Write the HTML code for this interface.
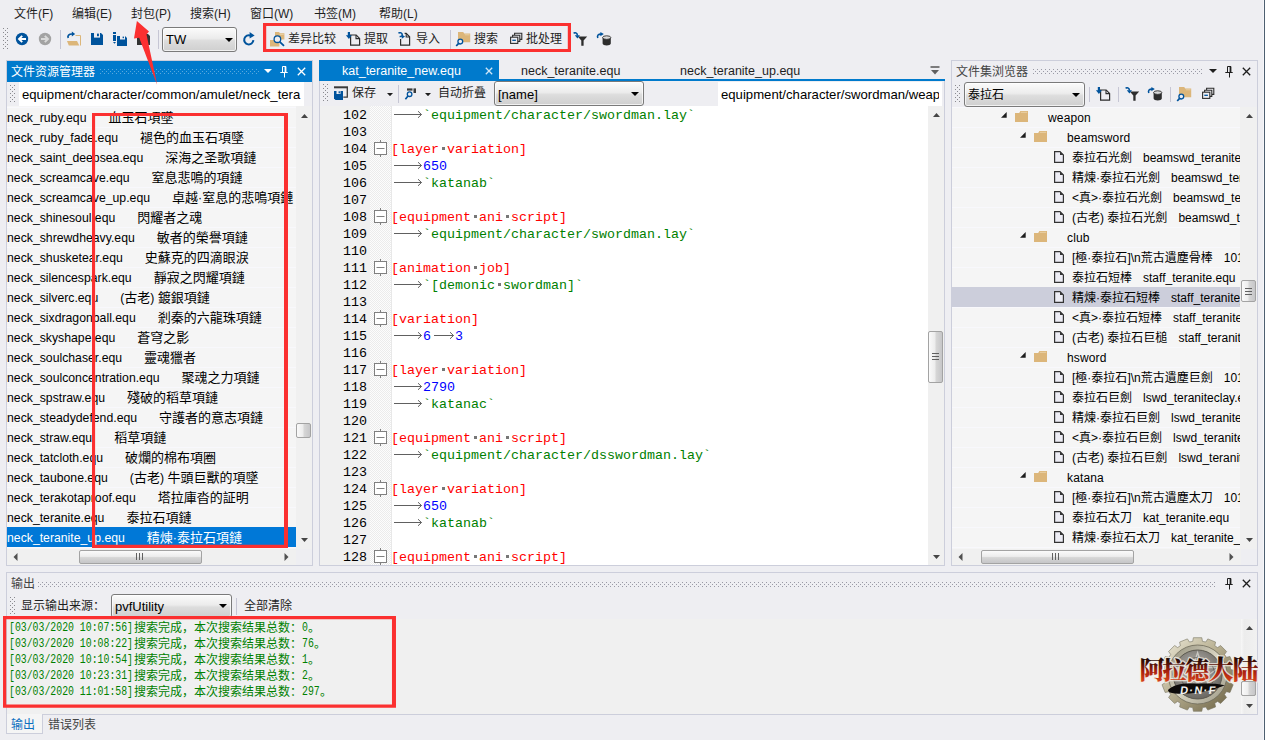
<!DOCTYPE html><html lang="zh"><head><meta charset="utf-8"><title>pvfUtility</title><style>
*{box-sizing:border-box;margin:0;padding:0}
html,body{width:1265px;height:740px;overflow:hidden;background:#eeeef2;font-family:"Liberation Sans","Noto Sans CJK SC",sans-serif;font-size:12px;color:#1e1e1e}
.a{position:absolute;white-space:pre}
.b{position:absolute}
.c{font-family:"Liberation Sans","Noto Sans CJK SC",sans-serif}
.k{font-size:13px}
.m{font-family:"Liberation Mono",monospace}
.combo{position:absolute;border:1px solid #7a7a7a;border-radius:3px;background:linear-gradient(#fbfbfb,#ececec 45%,#dddddd 55%,#cfcfcf);box-shadow:inset 0 0 0 1px rgba(255,255,255,.7)}
.thumb{position:absolute;border:1px solid #a3a3a3;border-radius:2px;background:linear-gradient(90deg,#fafafa,#ededed 45%,#d6d6d6 55%,#c6c6c8)}
.thumbh{position:absolute;border:1px solid #a3a3a3;border-radius:2px;background:linear-gradient(#fafafa,#ededed 45%,#d6d6d6 55%,#c6c6c8)}
</style></head><body><div class="a " style="left:14px;top:3.5px;font-size:12px;line-height:20px;"><span class="c">文件</span>(F)</div>
<div class="a " style="left:72px;top:3.5px;font-size:12px;line-height:20px;"><span class="c">编辑</span>(E)</div>
<div class="a " style="left:131px;top:3.5px;font-size:12px;line-height:20px;"><span class="c">封包</span>(P)</div>
<div class="a " style="left:190px;top:3.5px;font-size:12px;line-height:20px;"><span class="c">搜索</span>(H)</div>
<div class="a " style="left:250px;top:3.5px;font-size:12px;line-height:20px;"><span class="c">窗口</span>(W)</div>
<div class="a " style="left:314px;top:3.5px;font-size:12px;line-height:20px;"><span class="c">书签</span>(M)</div>
<div class="a " style="left:379px;top:3.5px;font-size:12px;line-height:20px;"><span class="c">帮助</span>(L)</div>
<svg class="b" style="left:3px;top:28px;" width="5" height="21" viewBox="0 0 5 21"><g fill="#8a8a8f" shape-rendering="crispEdges"><rect x="0" y="0" width="1" height="1"/><rect x="4" y="0" width="1" height="1"/><rect x="2" y="2" width="1" height="1"/><rect x="0" y="4" width="1" height="1"/><rect x="4" y="4" width="1" height="1"/><rect x="2" y="6" width="1" height="1"/><rect x="0" y="8" width="1" height="1"/><rect x="4" y="8" width="1" height="1"/><rect x="2" y="10" width="1" height="1"/><rect x="0" y="12" width="1" height="1"/><rect x="4" y="12" width="1" height="1"/><rect x="2" y="14" width="1" height="1"/><rect x="0" y="16" width="1" height="1"/><rect x="4" y="16" width="1" height="1"/><rect x="2" y="18" width="1" height="1"/><rect x="0" y="20" width="1" height="1"/><rect x="4" y="20" width="1" height="1"/></g></svg>
<svg class="b" style="left:15px;top:32px;" width="14" height="14" viewBox="0 0 14 14"><circle cx="7" cy="7" r="6.2" fill="#00539c"/><path d="M11 7H4.5M7.2 3.8L4 7L7.2 10.2" stroke="#fff" stroke-width="1.9" fill="none"/></svg>
<svg class="b" style="left:38px;top:32px;" width="14" height="14" viewBox="0 0 14 14"><circle cx="7" cy="7" r="6.2" fill="#a3a3a3"/><path d="M3 7H9.5M6.8 3.8L10 7L6.8 10.2" stroke="#dadada" stroke-width="1.9" fill="none"/></svg>
<div class="b" style="left:60px;top:30px;width:1px;height:19px;background:#c6c6d4;"></div>
<svg class="b" style="left:66px;top:31px;" width="16" height="16" viewBox="0 0 16 16"><path d="M9.5 4.5H14.5V14.5" fill="none" stroke="#dcb67a" stroke-width="1"/><path d="M1 10h10l2.3 4.6H2.8z" fill="#dcb67a"/><path d="M2.2 7C1.2 4.5 3 3 6 3h1.5" fill="none" stroke="#00539c" stroke-width="1.7"/><path d="M5.8 0.6L9.2 3L5.8 5.4z" fill="#00539c"/></svg>
<svg class="b" style="left:91px;top:33px;" width="12" height="12" viewBox="0 0 12 12"><path d="M0 0h10l2 2v10H0z" fill="#00539c"/><rect x="3" y="0" width="6" height="4.6" fill="#eeeef2"/><rect x="6" y="0.6" width="1.9" height="2.6" fill="#00539c"/></svg>
<svg class="b" style="left:113px;top:32px;" width="14" height="14" viewBox="0 0 14 14"><rect x="0" y="0" width="3" height="2" fill="#00539c"/><rect x="0" y="3" width="3" height="6" fill="#00539c"/><path d="M0 10h3l-1.5 1.8z" fill="#00539c"/><path d="M4 4h8l2 2v8H4z" fill="#00539c"/><rect x="7" y="4" width="5" height="3.5" fill="#eeeef2"/><rect x="9.6" y="4.6" width="1.4" height="1.6" fill="#00539c"/></svg>
<svg class="b" style="left:137px;top:34px;" width="13" height="11" viewBox="0 0 13 11"><path d="M0 0h11l2 2v9H0z" fill="#333"/><rect x="3" y="0" width="6" height="4" fill="#eeeef2"/><rect x="6" y="0.5" width="1.8" height="2.4" fill="#333"/></svg>
<div class="b" style="left:158px;top:30px;width:1px;height:19px;background:#c6c6d4;"></div>
<div class="combo" style="left:162px;top:27px;width:75px;height:25px;"></div>
<div class="a " style="left:166px;top:29px;font-size:13px;line-height:21px;color:#000;">TW</div>
<svg class="b" style="left:225px;top:38px" width="8" height="4"><path d="M0 0H8L4.0 4z" fill="#000"/></svg>
<svg class="b" style="left:241px;top:31px;" width="16" height="16" viewBox="0 0 16 16"><path d="M12.4 9.2A4.6 4.6 0 1 1 9.6 4.6" fill="none" stroke="#00539c" stroke-width="2"/><path d="M8.6 1L13.6 4.6L8.6 7.4z" fill="#00539c"/></svg>
<svg class="b" style="left:270px;top:32px;" width="16" height="16" viewBox="0 0 16 16"><path d="M5 0h4l1 1.2h4.4V7.4H5z" fill="#dcb67a"/><path d="M9.6 2.4h4.2" stroke="#ecd6ad" stroke-width="0.8"/><path d="M0 8h4.2l1 1.2H9.4V14.4H0z" fill="#dcb67a"/><circle cx="7.4" cy="7.2" r="3.3" fill="#eeeef2" stroke="#00539c" stroke-width="1.3"/><path d="M9.8 9.8L14 13.8" stroke="#00539c" stroke-width="1.8"/></svg>
<div class="a " style="left:288px;top:29px;font-size:12px;line-height:20px;"><span class="c">差异比较</span></div>
<svg class="b" style="left:345px;top:32px;" width="16" height="16" viewBox="0 0 16 16"><path d="M5.6 3h5.6l3.4 3.4v6.8h-9z" fill="#eeeef2" stroke="#2d2d2d" stroke-width="1.2"/><path d="M11 3v3.6h3.6" fill="none" stroke="#2d2d2d" stroke-width="1.1"/><path d="M3.9 0v4" stroke="#00539c" stroke-width="2.2"/><path d="M0.9 3.2h6L3.9 7.1z" fill="#00539c"/></svg>
<div class="a " style="left:364px;top:29px;font-size:12px;line-height:20px;"><span class="c">提取</span></div>
<svg class="b" style="left:397px;top:32px;" width="16" height="16" viewBox="0 0 16 16"><path d="M3.6 7v6.2h9V4.8L9.2 1.4H7.6" fill="none" stroke="#2d2d2d" stroke-width="1.2"/><path d="M9.2 1.4v3.6h3.4" fill="none" stroke="#2d2d2d" stroke-width="1.1"/><path d="M1.4 1.2C3 0.2 5.6 0.8 5.2 3.2C4.9 4.6 3.4 4.6 2.6 4.4" fill="none" stroke="#00539c" stroke-width="1.5"/><path d="M4.6 2.6L8 4.6L4.8 6.8z" fill="#00539c"/></svg>
<div class="a " style="left:416px;top:29px;font-size:12px;line-height:20px;"><span class="c">导入</span></div>
<div class="b" style="left:450px;top:30px;width:1px;height:19px;background:#c6c6d4;"></div>
<svg class="b" style="left:455px;top:32px;" width="16" height="16" viewBox="0 0 16 16"><path d="M3 0h5.2l1 1.4h6V10.2H3z" fill="#dcb67a"/><path d="M9.8 2.8h4.8" stroke="#ecd6ad" stroke-width="0.8"/><circle cx="5.3" cy="9.6" r="2.4" fill="#eeeef2" stroke="#00539c" stroke-width="1.3"/><path d="M3.6 11.4L1.2 14" stroke="#00539c" stroke-width="1.8"/></svg>
<div class="a " style="left:474px;top:29px;font-size:12px;line-height:20px;"><span class="c">搜索</span></div>
<svg class="b" style="left:507px;top:31.5px;" width="16" height="16" viewBox="0 0 16 16"><path d="M7.6 3V1.2h7.2v6.2h-1.8M5.6 5V3.2h7.2v6.2h-1.8" fill="none" stroke="#2d2d2d" stroke-width="1.1"/><rect x="3.6" y="5.2" width="7.2" height="6.2" fill="none" stroke="#2d2d2d" stroke-width="1.1"/><path d="M5.3 8.3h3.6" stroke="#00539c" stroke-width="1.3"/></svg>
<div class="a " style="left:526px;top:29px;font-size:12px;line-height:20px;"><span class="c">批处理</span></div>
<svg class="b" style="left:572px;top:32px;" width="16" height="16" viewBox="0 0 16 16"><path d="M5.8 4.6h9.4l-3.6 4v5.2h-2.3v-5.2z" fill="#2d2d2d"/><path d="M1.6 1.2C3.4 0.2 5.6 1.2 5.3 3.6" fill="none" stroke="#00539c" stroke-width="1.6"/><path d="M2.8 3.2h5.2L5.4 6.6z" fill="#00539c"/></svg>
<svg class="b" style="left:595.5px;top:32px;" width="16" height="16" viewBox="0 0 16 16"><path d="M6.6 5.6v6c0 2.6 8.2 2.6 8.2 0v-6z" fill="#2d2d2d"/><ellipse cx="10.7" cy="5.6" rx="4.1" ry="1.8" fill="#d9d9d9" stroke="#2d2d2d" stroke-width="0.9"/><path d="M1.8 6C0.8 3.4 2.4 2.1 5 2.1" fill="none" stroke="#00539c" stroke-width="1.6"/><path d="M4.4 0L7.8 2.1L4.4 4.3z" fill="#00539c"/></svg>
<div class="b" style="left:6px;top:60px;width:307px;height:506px;border:1px solid #cccedb"></div>
<div class="b" style="left:7px;top:61px;width:305px;height:21px;background:#007acc;"></div>
<div class="a " style="left:11px;top:62px;font-size:12px;line-height:20px;color:#fff;"><span class="c">文件资源管理器</span></div>
<svg class="b" style="left:100px;top:69px;" width="160" height="5" viewBox="0 0 160 5"><defs><pattern id="hg36" width="4" height="4" patternUnits="userSpaceOnUse"><rect x="0" y="0" width="1" height="1" fill="#59a8de"/><rect x="2" y="2" width="1" height="1" fill="#59a8de"/></pattern></defs><rect width="160" height="5" fill="url(#hg36)" shape-rendering="crispEdges"/></svg>
<svg class="b" style="left:264px;top:69px" width="8" height="4"><path d="M0 0H8L4.0 4z" fill="#fff"/></svg>
<svg class="b" style="left:280px;top:66px;" width="8" height="12" viewBox="0 0 8 12"><path d="M2.5 0.5h3.5M2.5 0.5v6M0.3 6.5h7.4M4.5 7v4.5" fill="none" stroke="#fff" stroke-width="1"/><path d="M5.5 0.5v6" stroke="#fff" stroke-width="1.8"/></svg>
<svg class="b" style="left:296.5px;top:66.5px;" width="9" height="9" viewBox="0 0 9 9"><path d="M0.8 0.8L8.2 8.2M8.2 0.8L0.8 8.2" stroke="#fff" stroke-width="1.3"/></svg>
<svg class="b" style="left:10px;top:85px;" width="5" height="17" viewBox="0 0 5 17"><g fill="#8a8a8f" shape-rendering="crispEdges"><rect x="0" y="0" width="1" height="1"/><rect x="4" y="0" width="1" height="1"/><rect x="2" y="2" width="1" height="1"/><rect x="0" y="4" width="1" height="1"/><rect x="4" y="4" width="1" height="1"/><rect x="2" y="6" width="1" height="1"/><rect x="0" y="8" width="1" height="1"/><rect x="4" y="8" width="1" height="1"/><rect x="2" y="10" width="1" height="1"/><rect x="0" y="12" width="1" height="1"/><rect x="4" y="12" width="1" height="1"/><rect x="2" y="14" width="1" height="1"/><rect x="0" y="16" width="1" height="1"/><rect x="4" y="16" width="1" height="1"/></g></svg>
<div class="b" style="left:19px;top:82px;width:285px;height:24px;background:#fff;"></div>
<div class="a " style="left:22px;top:84px;font-size:13.15px;line-height:21.15px;color:#000;">equipment/character/common/amulet/neck_tera</div>
<div class="b" style="left:7px;top:106px;width:289px;height:443px;background:#f5f5f5;background-image:repeating-linear-gradient(#f8f8fc 0 1px,#f5f5f5 1px 20px);background-position:0 1px"></div>
<div class="a" style="left:7px;top:108px;font-size:12.25px;line-height:20px;color:#000"><span>neck_ruby.equ</span><span style="margin-left:22px"><span class="c k">血玉石項墜</span></span></div>
<div class="a" style="left:7px;top:128px;font-size:12.25px;line-height:20px;color:#000"><span>neck_ruby_fade.equ</span><span style="margin-left:22px"><span class="c k">褪色的血玉石項墜</span></span></div>
<div class="a" style="left:7px;top:148px;font-size:12.25px;line-height:20px;color:#000"><span>neck_saint_deepsea.equ</span><span style="margin-left:22px"><span class="c k">深海之圣歌項鏈</span></span></div>
<div class="a" style="left:7px;top:168px;font-size:12.25px;line-height:20px;color:#000"><span>neck_screamcave.equ</span><span style="margin-left:22px"><span class="c k">窒息悲鳴的項鏈</span></span></div>
<div class="a" style="left:7px;top:188px;font-size:12.25px;line-height:20px;color:#000"><span>neck_screamcave_up.equ</span><span style="margin-left:22px"><span class="c k">卓越</span>·<span class="c k">窒息的悲鳴項鏈</span></span></div>
<div class="a" style="left:7px;top:208px;font-size:12.25px;line-height:20px;color:#000"><span>neck_shinesoul.equ</span><span style="margin-left:22px"><span class="c k">閃耀者之魂</span></span></div>
<div class="a" style="left:7px;top:228px;font-size:12.25px;line-height:20px;color:#000"><span>neck_shrewdheavy.equ</span><span style="margin-left:22px"><span class="c k">敏者的榮譽項鏈</span></span></div>
<div class="a" style="left:7px;top:248px;font-size:12.25px;line-height:20px;color:#000"><span>neck_shusketear.equ</span><span style="margin-left:22px"><span class="c k">史蘇克的四滴眼淚</span></span></div>
<div class="a" style="left:7px;top:268px;font-size:12.25px;line-height:20px;color:#000"><span>neck_silencespark.equ</span><span style="margin-left:22px"><span class="c k">靜寂之閃耀項鏈</span></span></div>
<div class="a" style="left:7px;top:288px;font-size:12.25px;line-height:20px;color:#000"><span>neck_silverc.equ</span><span style="margin-left:22px">(<span class="c k">古老</span>) <span class="c k">鍍銀項鏈</span></span></div>
<div class="a" style="left:7px;top:308px;font-size:12.25px;line-height:20px;color:#000"><span>neck_sixdragonball.equ</span><span style="margin-left:22px"><span class="c k">剎秦的六龍珠項鏈</span></span></div>
<div class="a" style="left:7px;top:328px;font-size:12.25px;line-height:20px;color:#000"><span>neck_skyshape.equ</span><span style="margin-left:22px"><span class="c k">蒼穹之影</span></span></div>
<div class="a" style="left:7px;top:348px;font-size:12.25px;line-height:20px;color:#000"><span>neck_soulchaser.equ</span><span style="margin-left:22px"><span class="c k">靈魂獵者</span></span></div>
<div class="a" style="left:7px;top:368px;font-size:12.25px;line-height:20px;color:#000"><span>neck_soulconcentration.equ</span><span style="margin-left:22px"><span class="c k">聚魂之力項鏈</span></span></div>
<div class="a" style="left:7px;top:388px;font-size:12.25px;line-height:20px;color:#000"><span>neck_spstraw.equ</span><span style="margin-left:22px"><span class="c k">殘破的稻草項鏈</span></span></div>
<div class="a" style="left:7px;top:408px;font-size:12.25px;line-height:20px;color:#000"><span>neck_steadydefend.equ</span><span style="margin-left:22px"><span class="c k">守護者的意志項鏈</span></span></div>
<div class="a" style="left:7px;top:428px;font-size:12.25px;line-height:20px;color:#000"><span>neck_straw.equ</span><span style="margin-left:22px"><span class="c k">稻草項鏈</span></span></div>
<div class="a" style="left:7px;top:448px;font-size:12.25px;line-height:20px;color:#000"><span>neck_tatcloth.equ</span><span style="margin-left:22px"><span class="c k">破爛的棉布項圈</span></span></div>
<div class="a" style="left:7px;top:468px;font-size:12.25px;line-height:20px;color:#000"><span>neck_taubone.equ</span><span style="margin-left:22px">(<span class="c k">古老</span>) <span class="c k">牛頭巨獸的項墜</span></span></div>
<div class="a" style="left:7px;top:488px;font-size:12.25px;line-height:20px;color:#000"><span>neck_terakotaproof.equ</span><span style="margin-left:22px"><span class="c k">塔拉庫沓的証明</span></span></div>
<div class="a" style="left:7px;top:508px;font-size:12.25px;line-height:20px;color:#000"><span>neck_teranite.equ</span><span style="margin-left:22px"><span class="c k">泰拉石項鏈</span></span></div>
<div class="b" style="left:7px;top:527px;width:289px;height:20px;background:#0078d7;"></div>
<div class="a" style="left:7px;top:528px;font-size:12.25px;line-height:20px;color:#fff"><span>neck_teranite_up.equ</span><span style="margin-left:22px"><span class="c k">精煉</span>·<span class="c k">泰拉石項鏈</span></span></div>
<div class="b" style="left:296px;top:106px;width:16px;height:443px;background:#f0f0f0;"></div>
<svg class="b" style="left:301px;top:114px;" width="7" height="4" viewBox="0 0 7 4"><path d="M0 4L3.5 0L7 4z" fill="#454545"/></svg>
<svg class="b" style="left:301px;top:538px;" width="7" height="4" viewBox="0 0 7 4"><path d="M0 0L3.5 4L7 0z" fill="#454545"/></svg>
<div class="thumb" style="left:296px;top:423px;width:15px;height:15px;"></div>
<div class="b" style="left:7px;top:549px;width:289px;height:16px;background:#f0f0f0;"></div>
<div class="thumbh" style="left:79px;top:549.5px;width:123px;height:14px;"></div>
<svg class="b" style="left:12.5px;top:552.5px;" width="5" height="8" viewBox="0 0 5 8"><path d="M4.5 0L0.5 4L4.5 8z" fill="#505050"/></svg>
<svg class="b" style="left:284px;top:552.5px;" width="5" height="8" viewBox="0 0 5 8"><path d="M0.5 0L4.5 4L0.5 8z" fill="#505050"/></svg>
<div class="b" style="left:136px;top:553px;width:1px;height:7px;background:#606060;"></div>
<div class="b" style="left:139px;top:553px;width:1px;height:7px;background:#606060;"></div>
<div class="b" style="left:142px;top:553px;width:1px;height:7px;background:#606060;"></div>
<div class="b" style="left:319px;top:60px;width:180px;height:21px;background:#007acc;"></div>
<div class="b" style="left:319px;top:79px;width:626px;height:2px;background:#007acc;"></div>
<div class="a " style="left:342px;top:61px;font-size:12.5px;line-height:20.5px;color:#fff;">kat_teranite_new.equ</div>
<svg class="b" style="left:484.5px;top:66.5px;" width="8" height="8" viewBox="0 0 8 8"><path d="M0.8 0.8L7.2 7.2M7.2 0.8L0.8 7.2" stroke="#cfe6f7" stroke-width="1.3"/></svg>
<div class="a " style="left:521px;top:61px;font-size:12.5px;line-height:20.5px;color:#1e1e1e;">neck_teranite.equ</div>
<div class="a " style="left:680px;top:61px;font-size:12.5px;line-height:20.5px;color:#1e1e1e;">neck_teranite_up.equ</div>
<svg class="b" style="left:930px;top:66px;" width="10" height="9" viewBox="0 0 10 9"><path d="M0.5 1h9" stroke="#606060" stroke-width="1.6"/><path d="M1 4h8L5 8.5z" fill="#606060"/></svg>
<div class="b" style="left:319px;top:81px;width:1px;height:485px;background:#cccedb;"></div>
<div class="b" style="left:944px;top:81px;width:1px;height:485px;background:#cccedb;"></div>
<div class="b" style="left:319px;top:565px;width:626px;height:1px;background:#cccedb;"></div>
<svg class="b" style="left:323px;top:84px;" width="5" height="17" viewBox="0 0 5 17"><g fill="#8a8a8f" shape-rendering="crispEdges"><rect x="0" y="0" width="1" height="1"/><rect x="4" y="0" width="1" height="1"/><rect x="2" y="2" width="1" height="1"/><rect x="0" y="4" width="1" height="1"/><rect x="4" y="4" width="1" height="1"/><rect x="2" y="6" width="1" height="1"/><rect x="0" y="8" width="1" height="1"/><rect x="4" y="8" width="1" height="1"/><rect x="2" y="10" width="1" height="1"/><rect x="0" y="12" width="1" height="1"/><rect x="4" y="12" width="1" height="1"/><rect x="2" y="14" width="1" height="1"/><rect x="0" y="16" width="1" height="1"/><rect x="4" y="16" width="1" height="1"/></g></svg>
<svg class="b" style="left:333px;top:86px;" width="15" height="14" viewBox="0 0 15 14"><rect x="1" y="0.3" width="14" height="2" fill="#3a3a3a"/><path d="M14.3 2v9.2h-4" fill="none" stroke="#3a3a3a" stroke-width="1.3"/><path d="M1 5h9v9H2.5L1 12.5z" fill="#00539c"/><rect x="3.5" y="5" width="4" height="3" fill="#eeeef2"/><rect x="5.6" y="5.3" width="1.3" height="2" fill="#00539c"/></svg>
<div class="a " style="left:352px;top:83px;font-size:12px;line-height:20px;"><span class="c">保存</span></div>
<svg class="b" style="left:386.5px;top:92.5px" width="6" height="3.2"><path d="M0 0H6L3.0 3.2z" fill="#1e1e1e"/></svg>
<div class="b" style="left:398px;top:85px;width:1px;height:18px;background:#c6c6d4;"></div>
<svg class="b" style="left:404px;top:87px;" width="13" height="13" viewBox="0 0 13 13"><rect x="3" y="1.4" width="5.5" height="2.2" fill="#3a3a3a"/><rect x="9.5" y="1.4" width="2.5" height="4.6" fill="#3a3a3a"/><circle cx="5.6" cy="7.2" r="2.3" fill="none" stroke="#00539c" stroke-width="1.3"/><path d="M4 9L1.4 12.2" stroke="#00539c" stroke-width="1.7"/></svg>
<svg class="b" style="left:424.5px;top:92.5px" width="6" height="3.2"><path d="M0 0H6L3.0 3.2z" fill="#1e1e1e"/></svg>
<div class="a " style="left:438px;top:83px;font-size:12px;line-height:20px;"><span class="c">自动折叠</span></div>
<div class="combo" style="left:494px;top:81px;width:150px;height:25px;"></div>
<div class="a " style="left:498px;top:84px;font-size:13px;line-height:21px;color:#000;">[name]</div>
<svg class="b" style="left:631px;top:92px" width="8" height="4"><path d="M0 0H8L4.0 4z" fill="#000"/></svg>
<div class="b" style="left:718px;top:82px;width:224px;height:24px;background:#fff;"></div>
<div class="a" style="left:721px;top:83.5px;line-height:21px;font-size:13.15px;color:#000;width:218px;overflow:hidden">equipment/character/swordman/weapon</div>
<div class="b" style="left:320px;top:106px;width:50px;height:459px;background:#f0f0f0;"></div>
<div class="b" style="left:370px;top:106px;width:21px;height:459px;background-image:conic-gradient(#fdfdfd 25%,#ececec 0 50%,#fdfdfd 0 75%,#ececec 0);background-size:2px 2px"></div>
<div class="b" style="left:391px;top:106px;width:1px;height:459px;background:#e8e8e8;"></div>
<div class="b" style="left:392px;top:106px;width:536px;height:459px;background:#fff;"></div>
<div class="b" style="left:320px;top:106px;width:608px;height:459px;overflow:hidden">
<div class="a m" style="left:23px;top:0px;line-height:19px;font-size:13.33px;color:#000;width:24px;text-align:right">102</div>
<svg class="b" style="left:71px;top:0px" width="32" height="17" viewBox="0 0 32 17"><path d="M3 8.5H30.5M27 5.2L30.5 8.5L27 11.8" fill="none" stroke="#606060" stroke-width="1"/></svg>
<div class="a m" style="left:103px;top:0px;line-height:19px;font-size:13.33px;color:#008000">`equipment/character/swordman.lay`</div>
<div class="a m" style="left:23px;top:17px;line-height:19px;font-size:13.33px;color:#000;width:24px;text-align:right">103</div>
<div class="a m" style="left:23px;top:34px;line-height:19px;font-size:13.33px;color:#000;width:24px;text-align:right">104</div>
<svg class="b" style="left:54px;top:34px" width="13" height="17" viewBox="0 0 13 17"><path d="M6.5 0v2M6.5 15v2" stroke="#808080"/><rect x="0.5" y="2.5" width="12" height="12" fill="#fff" stroke="#808080"/><path d="M2.5 8.5h8" stroke="#808080"/></svg>
<div class="a m" style="left:71px;top:34px;line-height:19px;font-size:13.33px;color:#ff0000">[layer</div>
<div class="b" style="left:122px;top:41px;width:3px;height:3px;background:#777"></div>
<div class="a m" style="left:127px;top:34px;line-height:19px;font-size:13.33px;color:#ff0000">variation]</div>
<div class="a m" style="left:23px;top:51px;line-height:19px;font-size:13.33px;color:#000;width:24px;text-align:right">105</div>
<svg class="b" style="left:71px;top:51px" width="32" height="17" viewBox="0 0 32 17"><path d="M3 8.5H30.5M27 5.2L30.5 8.5L27 11.8" fill="none" stroke="#606060" stroke-width="1"/></svg>
<div class="a m" style="left:103px;top:51px;line-height:19px;font-size:13.33px;color:#0000ff">650</div>
<div class="a m" style="left:23px;top:68px;line-height:19px;font-size:13.33px;color:#000;width:24px;text-align:right">106</div>
<svg class="b" style="left:71px;top:68px" width="32" height="17" viewBox="0 0 32 17"><path d="M3 8.5H30.5M27 5.2L30.5 8.5L27 11.8" fill="none" stroke="#606060" stroke-width="1"/></svg>
<div class="a m" style="left:103px;top:68px;line-height:19px;font-size:13.33px;color:#008000">`katanab`</div>
<div class="a m" style="left:23px;top:85px;line-height:19px;font-size:13.33px;color:#000;width:24px;text-align:right">107</div>
<div class="a m" style="left:23px;top:102px;line-height:19px;font-size:13.33px;color:#000;width:24px;text-align:right">108</div>
<svg class="b" style="left:54px;top:102px" width="13" height="17" viewBox="0 0 13 17"><path d="M6.5 0v2M6.5 15v2" stroke="#808080"/><rect x="0.5" y="2.5" width="12" height="12" fill="#fff" stroke="#808080"/><path d="M2.5 8.5h8" stroke="#808080"/></svg>
<div class="a m" style="left:71px;top:102px;line-height:19px;font-size:13.33px;color:#ff0000">[equipment</div>
<div class="b" style="left:154px;top:109px;width:3px;height:3px;background:#777"></div>
<div class="a m" style="left:159px;top:102px;line-height:19px;font-size:13.33px;color:#ff0000">ani</div>
<div class="b" style="left:186px;top:109px;width:3px;height:3px;background:#777"></div>
<div class="a m" style="left:191px;top:102px;line-height:19px;font-size:13.33px;color:#ff0000">script]</div>
<div class="a m" style="left:23px;top:119px;line-height:19px;font-size:13.33px;color:#000;width:24px;text-align:right">109</div>
<svg class="b" style="left:71px;top:119px" width="32" height="17" viewBox="0 0 32 17"><path d="M3 8.5H30.5M27 5.2L30.5 8.5L27 11.8" fill="none" stroke="#606060" stroke-width="1"/></svg>
<div class="a m" style="left:103px;top:119px;line-height:19px;font-size:13.33px;color:#008000">`equipment/character/swordman.lay`</div>
<div class="a m" style="left:23px;top:136px;line-height:19px;font-size:13.33px;color:#000;width:24px;text-align:right">110</div>
<div class="a m" style="left:23px;top:153px;line-height:19px;font-size:13.33px;color:#000;width:24px;text-align:right">111</div>
<svg class="b" style="left:54px;top:153px" width="13" height="17" viewBox="0 0 13 17"><path d="M6.5 0v2M6.5 15v2" stroke="#808080"/><rect x="0.5" y="2.5" width="12" height="12" fill="#fff" stroke="#808080"/><path d="M2.5 8.5h8" stroke="#808080"/></svg>
<div class="a m" style="left:71px;top:153px;line-height:19px;font-size:13.33px;color:#ff0000">[animation</div>
<div class="b" style="left:154px;top:160px;width:3px;height:3px;background:#777"></div>
<div class="a m" style="left:159px;top:153px;line-height:19px;font-size:13.33px;color:#ff0000">job]</div>
<div class="a m" style="left:23px;top:170px;line-height:19px;font-size:13.33px;color:#000;width:24px;text-align:right">112</div>
<svg class="b" style="left:71px;top:170px" width="32" height="17" viewBox="0 0 32 17"><path d="M3 8.5H30.5M27 5.2L30.5 8.5L27 11.8" fill="none" stroke="#606060" stroke-width="1"/></svg>
<div class="a m" style="left:103px;top:170px;line-height:19px;font-size:13.33px;color:#008000">`[demonic</div>
<div class="b" style="left:178px;top:177px;width:3px;height:3px;background:#777"></div>
<div class="a m" style="left:183px;top:170px;line-height:19px;font-size:13.33px;color:#008000">swordman]`</div>
<div class="a m" style="left:23px;top:187px;line-height:19px;font-size:13.33px;color:#000;width:24px;text-align:right">113</div>
<div class="a m" style="left:23px;top:204px;line-height:19px;font-size:13.33px;color:#000;width:24px;text-align:right">114</div>
<svg class="b" style="left:54px;top:204px" width="13" height="17" viewBox="0 0 13 17"><path d="M6.5 0v2M6.5 15v2" stroke="#808080"/><rect x="0.5" y="2.5" width="12" height="12" fill="#fff" stroke="#808080"/><path d="M2.5 8.5h8" stroke="#808080"/></svg>
<div class="a m" style="left:71px;top:204px;line-height:19px;font-size:13.33px;color:#ff0000">[variation]</div>
<div class="a m" style="left:23px;top:221px;line-height:19px;font-size:13.33px;color:#000;width:24px;text-align:right">115</div>
<svg class="b" style="left:71px;top:221px" width="32" height="17" viewBox="0 0 32 17"><path d="M3 8.5H30.5M27 5.2L30.5 8.5L27 11.8" fill="none" stroke="#606060" stroke-width="1"/></svg>
<div class="a m" style="left:103px;top:221px;line-height:19px;font-size:13.33px;color:#0000ff">6</div>
<svg class="b" style="left:111px;top:221px" width="24" height="17" viewBox="0 0 24 17"><path d="M3 8.5H22.5M19 5.2L22.5 8.5L19 11.8" fill="none" stroke="#606060" stroke-width="1"/></svg>
<div class="a m" style="left:135px;top:221px;line-height:19px;font-size:13.33px;color:#0000ff">3</div>
<div class="a m" style="left:23px;top:238px;line-height:19px;font-size:13.33px;color:#000;width:24px;text-align:right">116</div>
<div class="a m" style="left:23px;top:255px;line-height:19px;font-size:13.33px;color:#000;width:24px;text-align:right">117</div>
<svg class="b" style="left:54px;top:255px" width="13" height="17" viewBox="0 0 13 17"><path d="M6.5 0v2M6.5 15v2" stroke="#808080"/><rect x="0.5" y="2.5" width="12" height="12" fill="#fff" stroke="#808080"/><path d="M2.5 8.5h8" stroke="#808080"/></svg>
<div class="a m" style="left:71px;top:255px;line-height:19px;font-size:13.33px;color:#ff0000">[layer</div>
<div class="b" style="left:122px;top:262px;width:3px;height:3px;background:#777"></div>
<div class="a m" style="left:127px;top:255px;line-height:19px;font-size:13.33px;color:#ff0000">variation]</div>
<div class="a m" style="left:23px;top:272px;line-height:19px;font-size:13.33px;color:#000;width:24px;text-align:right">118</div>
<svg class="b" style="left:71px;top:272px" width="32" height="17" viewBox="0 0 32 17"><path d="M3 8.5H30.5M27 5.2L30.5 8.5L27 11.8" fill="none" stroke="#606060" stroke-width="1"/></svg>
<div class="a m" style="left:103px;top:272px;line-height:19px;font-size:13.33px;color:#0000ff">2790</div>
<div class="a m" style="left:23px;top:289px;line-height:19px;font-size:13.33px;color:#000;width:24px;text-align:right">119</div>
<svg class="b" style="left:71px;top:289px" width="32" height="17" viewBox="0 0 32 17"><path d="M3 8.5H30.5M27 5.2L30.5 8.5L27 11.8" fill="none" stroke="#606060" stroke-width="1"/></svg>
<div class="a m" style="left:103px;top:289px;line-height:19px;font-size:13.33px;color:#008000">`katanac`</div>
<div class="a m" style="left:23px;top:306px;line-height:19px;font-size:13.33px;color:#000;width:24px;text-align:right">120</div>
<div class="a m" style="left:23px;top:323px;line-height:19px;font-size:13.33px;color:#000;width:24px;text-align:right">121</div>
<svg class="b" style="left:54px;top:323px" width="13" height="17" viewBox="0 0 13 17"><path d="M6.5 0v2M6.5 15v2" stroke="#808080"/><rect x="0.5" y="2.5" width="12" height="12" fill="#fff" stroke="#808080"/><path d="M2.5 8.5h8" stroke="#808080"/></svg>
<div class="a m" style="left:71px;top:323px;line-height:19px;font-size:13.33px;color:#ff0000">[equipment</div>
<div class="b" style="left:154px;top:330px;width:3px;height:3px;background:#777"></div>
<div class="a m" style="left:159px;top:323px;line-height:19px;font-size:13.33px;color:#ff0000">ani</div>
<div class="b" style="left:186px;top:330px;width:3px;height:3px;background:#777"></div>
<div class="a m" style="left:191px;top:323px;line-height:19px;font-size:13.33px;color:#ff0000">script]</div>
<div class="a m" style="left:23px;top:340px;line-height:19px;font-size:13.33px;color:#000;width:24px;text-align:right">122</div>
<svg class="b" style="left:71px;top:340px" width="32" height="17" viewBox="0 0 32 17"><path d="M3 8.5H30.5M27 5.2L30.5 8.5L27 11.8" fill="none" stroke="#606060" stroke-width="1"/></svg>
<div class="a m" style="left:103px;top:340px;line-height:19px;font-size:13.33px;color:#008000">`equipment/character/dsswordman.lay`</div>
<div class="a m" style="left:23px;top:357px;line-height:19px;font-size:13.33px;color:#000;width:24px;text-align:right">123</div>
<div class="a m" style="left:23px;top:374px;line-height:19px;font-size:13.33px;color:#000;width:24px;text-align:right">124</div>
<svg class="b" style="left:54px;top:374px" width="13" height="17" viewBox="0 0 13 17"><path d="M6.5 0v2M6.5 15v2" stroke="#808080"/><rect x="0.5" y="2.5" width="12" height="12" fill="#fff" stroke="#808080"/><path d="M2.5 8.5h8" stroke="#808080"/></svg>
<div class="a m" style="left:71px;top:374px;line-height:19px;font-size:13.33px;color:#ff0000">[layer</div>
<div class="b" style="left:122px;top:381px;width:3px;height:3px;background:#777"></div>
<div class="a m" style="left:127px;top:374px;line-height:19px;font-size:13.33px;color:#ff0000">variation]</div>
<div class="a m" style="left:23px;top:391px;line-height:19px;font-size:13.33px;color:#000;width:24px;text-align:right">125</div>
<svg class="b" style="left:71px;top:391px" width="32" height="17" viewBox="0 0 32 17"><path d="M3 8.5H30.5M27 5.2L30.5 8.5L27 11.8" fill="none" stroke="#606060" stroke-width="1"/></svg>
<div class="a m" style="left:103px;top:391px;line-height:19px;font-size:13.33px;color:#0000ff">650</div>
<div class="a m" style="left:23px;top:408px;line-height:19px;font-size:13.33px;color:#000;width:24px;text-align:right">126</div>
<svg class="b" style="left:71px;top:408px" width="32" height="17" viewBox="0 0 32 17"><path d="M3 8.5H30.5M27 5.2L30.5 8.5L27 11.8" fill="none" stroke="#606060" stroke-width="1"/></svg>
<div class="a m" style="left:103px;top:408px;line-height:19px;font-size:13.33px;color:#008000">`katanab`</div>
<div class="a m" style="left:23px;top:425px;line-height:19px;font-size:13.33px;color:#000;width:24px;text-align:right">127</div>
<div class="a m" style="left:23px;top:442px;line-height:19px;font-size:13.33px;color:#000;width:24px;text-align:right">128</div>
<svg class="b" style="left:54px;top:442px" width="13" height="17" viewBox="0 0 13 17"><path d="M6.5 0v2M6.5 15v2" stroke="#808080"/><rect x="0.5" y="2.5" width="12" height="12" fill="#fff" stroke="#808080"/><path d="M2.5 8.5h8" stroke="#808080"/></svg>
<div class="a m" style="left:71px;top:442px;line-height:19px;font-size:13.33px;color:#ff0000">[equipment</div>
<div class="b" style="left:154px;top:449px;width:3px;height:3px;background:#777"></div>
<div class="a m" style="left:159px;top:442px;line-height:19px;font-size:13.33px;color:#ff0000">ani</div>
<div class="b" style="left:186px;top:449px;width:3px;height:3px;background:#777"></div>
<div class="a m" style="left:191px;top:442px;line-height:19px;font-size:13.33px;color:#ff0000">script]</div>
</div>
<div class="b" style="left:928px;top:106px;width:16px;height:459px;background:#f0f0f0;"></div>
<svg class="b" style="left:933px;top:113px;" width="7" height="4" viewBox="0 0 7 4"><path d="M0 4L3.5 0L7 4z" fill="#454545"/></svg>
<svg class="b" style="left:933px;top:555px;" width="7" height="4" viewBox="0 0 7 4"><path d="M0 0L3.5 4L7 0z" fill="#454545"/></svg>
<div class="thumb" style="left:928px;top:331px;width:15px;height:52px;"></div>
<div class="b" style="left:932px;top:353px;width:7px;height:1px;background:#606060;"></div>
<div class="b" style="left:932px;top:356px;width:7px;height:1px;background:#606060;"></div>
<div class="b" style="left:932px;top:359px;width:7px;height:1px;background:#606060;"></div>
<div class="b" style="left:951px;top:60px;width:307px;height:506px;border:1px solid #cccedb"></div>
<div class="a " style="left:956px;top:62px;font-size:12px;line-height:20px;color:#444;"><span class="c">文件集浏览器</span></div>
<svg class="b" style="left:1033px;top:69px;" width="169" height="5" viewBox="0 0 169 5"><defs><pattern id="hg205" width="4" height="4" patternUnits="userSpaceOnUse"><rect x="0" y="0" width="1" height="1" fill="#9a9aa6"/><rect x="2" y="2" width="1" height="1" fill="#9a9aa6"/></pattern></defs><rect width="169" height="5" fill="url(#hg205)" shape-rendering="crispEdges"/></svg>
<svg class="b" style="left:1209px;top:69px" width="8" height="4"><path d="M0 0H8L4.0 4z" fill="#1e1e1e"/></svg>
<svg class="b" style="left:1225px;top:66px;" width="8" height="12" viewBox="0 0 8 12"><path d="M2.5 0.5h3.5M2.5 0.5v6M0.3 6.5h7.4M4.5 7v4.5" fill="none" stroke="#1e1e1e" stroke-width="1"/><path d="M5.5 0.5v6" stroke="#1e1e1e" stroke-width="1.8"/></svg>
<svg class="b" style="left:1241.5px;top:66.5px;" width="9" height="9" viewBox="0 0 9 9"><path d="M0.8 0.8L8.2 8.2M8.2 0.8L0.8 8.2" stroke="#1e1e1e" stroke-width="1.3"/></svg>
<svg class="b" style="left:955px;top:85px;" width="5" height="17" viewBox="0 0 5 17"><g fill="#8a8a8f" shape-rendering="crispEdges"><rect x="0" y="0" width="1" height="1"/><rect x="4" y="0" width="1" height="1"/><rect x="2" y="2" width="1" height="1"/><rect x="0" y="4" width="1" height="1"/><rect x="4" y="4" width="1" height="1"/><rect x="2" y="6" width="1" height="1"/><rect x="0" y="8" width="1" height="1"/><rect x="4" y="8" width="1" height="1"/><rect x="2" y="10" width="1" height="1"/><rect x="0" y="12" width="1" height="1"/><rect x="4" y="12" width="1" height="1"/><rect x="2" y="14" width="1" height="1"/><rect x="0" y="16" width="1" height="1"/><rect x="4" y="16" width="1" height="1"/></g></svg>
<div class="combo" style="left:964px;top:82px;width:121px;height:25px;"></div>
<div class="a " style="left:968px;top:85px;font-size:12px;line-height:20px;color:#000;"><span class="c">泰拉石</span></div>
<svg class="b" style="left:1072px;top:93px" width="8" height="4"><path d="M0 0H8L4.0 4z" fill="#000"/></svg>
<div class="b" style="left:1089px;top:87px;width:1px;height:15px;background:#c6c6d4;"></div>
<svg class="b" style="left:1095px;top:87px;" width="16" height="16" viewBox="0 0 16 16"><path d="M5.6 3h5.6l3.4 3.4v6.8h-9z" fill="#eeeef2" stroke="#2d2d2d" stroke-width="1.2"/><path d="M11 3v3.6h3.6" fill="none" stroke="#2d2d2d" stroke-width="1.1"/><path d="M3.9 0v4" stroke="#00539c" stroke-width="2.2"/><path d="M0.9 3.2h6L3.9 7.1z" fill="#00539c"/></svg>
<div class="b" style="left:1118px;top:87px;width:1px;height:15px;background:#c6c6d4;"></div>
<svg class="b" style="left:1124px;top:87px;" width="16" height="16" viewBox="0 0 16 16"><path d="M5.8 4.6h9.4l-3.6 4v5.2h-2.3v-5.2z" fill="#2d2d2d"/><path d="M1.6 1.2C3.4 0.2 5.6 1.2 5.3 3.6" fill="none" stroke="#00539c" stroke-width="1.6"/><path d="M2.8 3.2h5.2L5.4 6.6z" fill="#00539c"/></svg>
<svg class="b" style="left:1147px;top:87px;" width="16" height="16" viewBox="0 0 16 16"><path d="M6.6 5.6v6c0 2.6 8.2 2.6 8.2 0v-6z" fill="#2d2d2d"/><ellipse cx="10.7" cy="5.6" rx="4.1" ry="1.8" fill="#d9d9d9" stroke="#2d2d2d" stroke-width="0.9"/><path d="M1.8 6C0.8 3.4 2.4 2.1 5 2.1" fill="none" stroke="#00539c" stroke-width="1.6"/><path d="M4.4 0L7.8 2.1L4.4 4.3z" fill="#00539c"/></svg>
<div class="b" style="left:1170px;top:87px;width:1px;height:15px;background:#c6c6d4;"></div>
<svg class="b" style="left:1176px;top:87px;" width="16" height="16" viewBox="0 0 16 16"><path d="M3 0h5.2l1 1.4h6V10.2H3z" fill="#dcb67a"/><path d="M9.8 2.8h4.8" stroke="#ecd6ad" stroke-width="0.8"/><circle cx="5.3" cy="9.6" r="2.4" fill="#eeeef2" stroke="#00539c" stroke-width="1.3"/><path d="M3.6 11.4L1.2 14" stroke="#00539c" stroke-width="1.8"/></svg>
<svg class="b" style="left:1199px;top:86.5px;" width="16" height="16" viewBox="0 0 16 16"><path d="M7.6 3V1.2h7.2v6.2h-1.8M5.6 5V3.2h7.2v6.2h-1.8" fill="none" stroke="#2d2d2d" stroke-width="1.1"/><rect x="3.6" y="5.2" width="7.2" height="6.2" fill="none" stroke="#2d2d2d" stroke-width="1.1"/><path d="M5.3 8.3h3.6" stroke="#00539c" stroke-width="1.3"/></svg>
<div class="b" style="left:952px;top:107px;width:288px;height:442px;background:#f5f5f5;background-image:repeating-linear-gradient(#f8f8fc 0 1px,#f5f5f5 1px 20px)"></div>
<div class="b" style="left:952px;top:107px;width:288px;height:442px;overflow:hidden">
<svg class="b" style="left:49px;top:4.5px" width="6" height="6"><path d="M5.7 0V5.7H0z" fill="#1e1e1e"/></svg>
<svg class="b" style="left:63px;top:4px" width="13" height="11" viewBox="0 0 13 11"><path d="M0 2h4.2l1.2-2h7.6v11H0z" fill="#dcb67a"/><path d="M5.8 1.3h6.4" stroke="#ecd6ad" stroke-width="0.9"/></svg>
<div class="a" style="left:96px;top:1px;line-height:20px;font-size:12px;color:#000;letter-spacing:0.15px">weapon</div>
<svg class="b" style="left:68px;top:24.5px" width="6" height="6"><path d="M5.7 0V5.7H0z" fill="#1e1e1e"/></svg>
<svg class="b" style="left:82px;top:24px" width="13" height="11" viewBox="0 0 13 11"><path d="M0 2h4.2l1.2-2h7.6v11H0z" fill="#dcb67a"/><path d="M5.8 1.3h6.4" stroke="#ecd6ad" stroke-width="0.9"/></svg>
<div class="a" style="left:115px;top:21px;line-height:20px;font-size:12px;color:#000;letter-spacing:0.15px">beamsword</div>
<svg class="b" style="left:102px;top:44px" width="10" height="12" viewBox="0 0 10 12"><path d="M0.6 0.6h5.4l3.4 3.4v7.4h-8.8z" fill="#ededf5" stroke="#333" stroke-width="1.2"/><path d="M6 0.6v3.4h3.4z" fill="#333"/></svg>
<div class="a" style="left:120px;top:41px;line-height:20px;font-size:12px;color:#000"><span class="c">泰拉石光劍</span><span style="margin-left:11px">beamswd_teranite.equ</span></div>
<svg class="b" style="left:102px;top:64px" width="10" height="12" viewBox="0 0 10 12"><path d="M0.6 0.6h5.4l3.4 3.4v7.4h-8.8z" fill="#ededf5" stroke="#333" stroke-width="1.2"/><path d="M6 0.6v3.4h3.4z" fill="#333"/></svg>
<div class="a" style="left:120px;top:61px;line-height:20px;font-size:12px;color:#000"><span class="c">精煉</span>·<span class="c">泰拉石光劍</span><span style="margin-left:11px">beamswd_teranite_up.equ</span></div>
<svg class="b" style="left:102px;top:84px" width="10" height="12" viewBox="0 0 10 12"><path d="M0.6 0.6h5.4l3.4 3.4v7.4h-8.8z" fill="#ededf5" stroke="#333" stroke-width="1.2"/><path d="M6 0.6v3.4h3.4z" fill="#333"/></svg>
<div class="a" style="left:120px;top:81px;line-height:20px;font-size:12px;color:#000">&lt;<span class="c">真</span>&gt;·<span class="c">泰拉石光劍</span><span style="margin-left:11px">beamswd_teranite_true.equ</span></div>
<svg class="b" style="left:102px;top:104px" width="10" height="12" viewBox="0 0 10 12"><path d="M0.6 0.6h5.4l3.4 3.4v7.4h-8.8z" fill="#ededf5" stroke="#333" stroke-width="1.2"/><path d="M6 0.6v3.4h3.4z" fill="#333"/></svg>
<div class="a" style="left:120px;top:101px;line-height:20px;font-size:12px;color:#000">(<span class="c">古老</span>) <span class="c">泰拉石光劍</span><span style="margin-left:11px">beamswd_teranite_old.equ</span></div>
<svg class="b" style="left:68px;top:124.5px" width="6" height="6"><path d="M5.7 0V5.7H0z" fill="#1e1e1e"/></svg>
<svg class="b" style="left:82px;top:124px" width="13" height="11" viewBox="0 0 13 11"><path d="M0 2h4.2l1.2-2h7.6v11H0z" fill="#dcb67a"/><path d="M5.8 1.3h6.4" stroke="#ecd6ad" stroke-width="0.9"/></svg>
<div class="a" style="left:115px;top:121px;line-height:20px;font-size:12px;color:#000;letter-spacing:0.15px">club</div>
<svg class="b" style="left:102px;top:144px" width="10" height="12" viewBox="0 0 10 12"><path d="M0.6 0.6h5.4l3.4 3.4v7.4h-8.8z" fill="#ededf5" stroke="#333" stroke-width="1.2"/><path d="M6 0.6v3.4h3.4z" fill="#333"/></svg>
<div class="a" style="left:120px;top:141px;line-height:20px;font-size:12px;color:#000">[<span class="c">極</span>·<span class="c">泰拉石</span>]\n<span class="c">荒古遺塵骨棒</span><span style="margin-left:11px">101000.equ</span></div>
<svg class="b" style="left:102px;top:164px" width="10" height="12" viewBox="0 0 10 12"><path d="M0.6 0.6h5.4l3.4 3.4v7.4h-8.8z" fill="#ededf5" stroke="#333" stroke-width="1.2"/><path d="M6 0.6v3.4h3.4z" fill="#333"/></svg>
<div class="a" style="left:120px;top:161px;line-height:20px;font-size:12px;color:#000"><span class="c">泰拉石短棒</span><span style="margin-left:11px">staff_teranite.equ</span></div>
<div class="b" style="left:0;top:180px;width:289px;height:20px;background:#cccedb"></div>
<svg class="b" style="left:102px;top:184px" width="10" height="12" viewBox="0 0 10 12"><path d="M0.6 0.6h5.4l3.4 3.4v7.4h-8.8z" fill="#ededf5" stroke="#333" stroke-width="1.2"/><path d="M6 0.6v3.4h3.4z" fill="#333"/></svg>
<div class="a" style="left:120px;top:181px;line-height:20px;font-size:12px;color:#000"><span class="c">精煉</span>·<span class="c">泰拉石短棒</span><span style="margin-left:11px">staff_teranite_up.equ</span></div>
<svg class="b" style="left:102px;top:204px" width="10" height="12" viewBox="0 0 10 12"><path d="M0.6 0.6h5.4l3.4 3.4v7.4h-8.8z" fill="#ededf5" stroke="#333" stroke-width="1.2"/><path d="M6 0.6v3.4h3.4z" fill="#333"/></svg>
<div class="a" style="left:120px;top:201px;line-height:20px;font-size:12px;color:#000">&lt;<span class="c">真</span>&gt;·<span class="c">泰拉石短棒</span><span style="margin-left:11px">staff_teranite_true.equ</span></div>
<svg class="b" style="left:102px;top:224px" width="10" height="12" viewBox="0 0 10 12"><path d="M0.6 0.6h5.4l3.4 3.4v7.4h-8.8z" fill="#ededf5" stroke="#333" stroke-width="1.2"/><path d="M6 0.6v3.4h3.4z" fill="#333"/></svg>
<div class="a" style="left:120px;top:221px;line-height:20px;font-size:12px;color:#000">(<span class="c">古老</span>) <span class="c">泰拉石巨槌</span><span style="margin-left:11px">staff_teranite_old.equ</span></div>
<svg class="b" style="left:68px;top:244.5px" width="6" height="6"><path d="M5.7 0V5.7H0z" fill="#1e1e1e"/></svg>
<svg class="b" style="left:82px;top:244px" width="13" height="11" viewBox="0 0 13 11"><path d="M0 2h4.2l1.2-2h7.6v11H0z" fill="#dcb67a"/><path d="M5.8 1.3h6.4" stroke="#ecd6ad" stroke-width="0.9"/></svg>
<div class="a" style="left:115px;top:241px;line-height:20px;font-size:12px;color:#000;letter-spacing:0.15px">hsword</div>
<svg class="b" style="left:102px;top:264px" width="10" height="12" viewBox="0 0 10 12"><path d="M0.6 0.6h5.4l3.4 3.4v7.4h-8.8z" fill="#ededf5" stroke="#333" stroke-width="1.2"/><path d="M6 0.6v3.4h3.4z" fill="#333"/></svg>
<div class="a" style="left:120px;top:261px;line-height:20px;font-size:12px;color:#000">[<span class="c">極</span>·<span class="c">泰拉石</span>]\n<span class="c">荒古遺塵巨劍</span><span style="margin-left:11px">101000.equ</span></div>
<svg class="b" style="left:102px;top:284px" width="10" height="12" viewBox="0 0 10 12"><path d="M0.6 0.6h5.4l3.4 3.4v7.4h-8.8z" fill="#ededf5" stroke="#333" stroke-width="1.2"/><path d="M6 0.6v3.4h3.4z" fill="#333"/></svg>
<div class="a" style="left:120px;top:281px;line-height:20px;font-size:12px;color:#000"><span class="c">泰拉石巨劍</span><span style="margin-left:11px">lswd_teraniteclay.equ</span></div>
<svg class="b" style="left:102px;top:304px" width="10" height="12" viewBox="0 0 10 12"><path d="M0.6 0.6h5.4l3.4 3.4v7.4h-8.8z" fill="#ededf5" stroke="#333" stroke-width="1.2"/><path d="M6 0.6v3.4h3.4z" fill="#333"/></svg>
<div class="a" style="left:120px;top:301px;line-height:20px;font-size:12px;color:#000"><span class="c">精煉</span>·<span class="c">泰拉石巨劍</span><span style="margin-left:11px">lswd_teranite_up.equ</span></div>
<svg class="b" style="left:102px;top:324px" width="10" height="12" viewBox="0 0 10 12"><path d="M0.6 0.6h5.4l3.4 3.4v7.4h-8.8z" fill="#ededf5" stroke="#333" stroke-width="1.2"/><path d="M6 0.6v3.4h3.4z" fill="#333"/></svg>
<div class="a" style="left:120px;top:321px;line-height:20px;font-size:12px;color:#000">&lt;<span class="c">真</span>&gt;·<span class="c">泰拉石巨劍</span><span style="margin-left:11px">lswd_teranite_true.equ</span></div>
<svg class="b" style="left:102px;top:344px" width="10" height="12" viewBox="0 0 10 12"><path d="M0.6 0.6h5.4l3.4 3.4v7.4h-8.8z" fill="#ededf5" stroke="#333" stroke-width="1.2"/><path d="M6 0.6v3.4h3.4z" fill="#333"/></svg>
<div class="a" style="left:120px;top:341px;line-height:20px;font-size:12px;color:#000">(<span class="c">古老</span>) <span class="c">泰拉石巨劍</span><span style="margin-left:11px">lswd_teranite_old.equ</span></div>
<svg class="b" style="left:68px;top:364.5px" width="6" height="6"><path d="M5.7 0V5.7H0z" fill="#1e1e1e"/></svg>
<svg class="b" style="left:82px;top:364px" width="13" height="11" viewBox="0 0 13 11"><path d="M0 2h4.2l1.2-2h7.6v11H0z" fill="#dcb67a"/><path d="M5.8 1.3h6.4" stroke="#ecd6ad" stroke-width="0.9"/></svg>
<div class="a" style="left:115px;top:361px;line-height:20px;font-size:12px;color:#000;letter-spacing:0.15px">katana</div>
<svg class="b" style="left:102px;top:384px" width="10" height="12" viewBox="0 0 10 12"><path d="M0.6 0.6h5.4l3.4 3.4v7.4h-8.8z" fill="#ededf5" stroke="#333" stroke-width="1.2"/><path d="M6 0.6v3.4h3.4z" fill="#333"/></svg>
<div class="a" style="left:120px;top:381px;line-height:20px;font-size:12px;color:#000">[<span class="c">極</span>·<span class="c">泰拉石</span>]\n<span class="c">荒古遺塵太刀</span><span style="margin-left:11px">101000.equ</span></div>
<svg class="b" style="left:102px;top:404px" width="10" height="12" viewBox="0 0 10 12"><path d="M0.6 0.6h5.4l3.4 3.4v7.4h-8.8z" fill="#ededf5" stroke="#333" stroke-width="1.2"/><path d="M6 0.6v3.4h3.4z" fill="#333"/></svg>
<div class="a" style="left:120px;top:401px;line-height:20px;font-size:12px;color:#000"><span class="c">泰拉石太刀</span><span style="margin-left:11px">kat_teranite.equ</span></div>
<svg class="b" style="left:102px;top:424px" width="10" height="12" viewBox="0 0 10 12"><path d="M0.6 0.6h5.4l3.4 3.4v7.4h-8.8z" fill="#ededf5" stroke="#333" stroke-width="1.2"/><path d="M6 0.6v3.4h3.4z" fill="#333"/></svg>
<div class="a" style="left:120px;top:421px;line-height:20px;font-size:12px;color:#000"><span class="c">精煉</span>·<span class="c">泰拉石太刀</span><span style="margin-left:11px">kat_teranite_up.equ</span></div>
</div>
<div class="b" style="left:1240px;top:107px;width:17px;height:442px;background:#f0f0f0;"></div>
<svg class="b" style="left:1246px;top:114px;" width="7" height="4" viewBox="0 0 7 4"><path d="M0 4L3.5 0L7 4z" fill="#454545"/></svg>
<svg class="b" style="left:1246px;top:538px;" width="7" height="4" viewBox="0 0 7 4"><path d="M0 0L3.5 4L7 0z" fill="#454545"/></svg>
<div class="thumb" style="left:1241px;top:280px;width:15px;height:22px;"></div>
<div class="b" style="left:1245px;top:288px;width:7px;height:1px;background:#606060;"></div>
<div class="b" style="left:1245px;top:291px;width:7px;height:1px;background:#606060;"></div>
<div class="b" style="left:1245px;top:294px;width:7px;height:1px;background:#606060;"></div>
<div class="b" style="left:952px;top:549px;width:289px;height:16px;background:#f0f0f0;"></div>
<div class="thumbh" style="left:981px;top:549.5px;width:152.5px;height:14px;"></div>
<svg class="b" style="left:957.5px;top:552.5px;" width="5" height="8" viewBox="0 0 5 8"><path d="M4.5 0L0.5 4L4.5 8z" fill="#505050"/></svg>
<svg class="b" style="left:1229px;top:552.5px;" width="5" height="8" viewBox="0 0 5 8"><path d="M0.5 0L4.5 4L0.5 8z" fill="#505050"/></svg>
<div class="b" style="left:1052px;top:553px;width:1px;height:7px;background:#606060;"></div>
<div class="b" style="left:1055px;top:553px;width:1px;height:7px;background:#606060;"></div>
<div class="b" style="left:1058px;top:553px;width:1px;height:7px;background:#606060;"></div>
<div class="b" style="left:6px;top:572px;width:1252px;height:143px;border:1px solid #cccedb"></div>
<div class="a " style="left:11px;top:574px;font-size:12px;line-height:20px;color:#444;"><span class="c">输出</span></div>
<svg class="b" style="left:38px;top:582px;" width="1178" height="5" viewBox="0 0 1178 5"><defs><pattern id="hg290" width="4" height="4" patternUnits="userSpaceOnUse"><rect x="0" y="0" width="1" height="1" fill="#9a9aa6"/><rect x="2" y="2" width="1" height="1" fill="#9a9aa6"/></pattern></defs><rect width="1178" height="5" fill="url(#hg290)" shape-rendering="crispEdges"/></svg>
<svg class="b" style="left:1225px;top:578px;" width="8" height="12" viewBox="0 0 8 12"><path d="M2.5 0.5h3.5M2.5 0.5v6M0.3 6.5h7.4M4.5 7v4.5" fill="none" stroke="#1e1e1e" stroke-width="1"/><path d="M5.5 0.5v6" stroke="#1e1e1e" stroke-width="1.8"/></svg>
<svg class="b" style="left:1241.5px;top:578.5px;" width="9" height="9" viewBox="0 0 9 9"><path d="M0.8 0.8L8.2 8.2M8.2 0.8L0.8 8.2" stroke="#1e1e1e" stroke-width="1.3"/></svg>
<svg class="b" style="left:10px;top:597px;" width="5" height="17" viewBox="0 0 5 17"><g fill="#8a8a8f" shape-rendering="crispEdges"><rect x="0" y="0" width="1" height="1"/><rect x="4" y="0" width="1" height="1"/><rect x="2" y="2" width="1" height="1"/><rect x="0" y="4" width="1" height="1"/><rect x="4" y="4" width="1" height="1"/><rect x="2" y="6" width="1" height="1"/><rect x="0" y="8" width="1" height="1"/><rect x="4" y="8" width="1" height="1"/><rect x="2" y="10" width="1" height="1"/><rect x="0" y="12" width="1" height="1"/><rect x="4" y="12" width="1" height="1"/><rect x="2" y="14" width="1" height="1"/><rect x="0" y="16" width="1" height="1"/><rect x="4" y="16" width="1" height="1"/></g></svg>
<div class="a " style="left:21px;top:596px;font-size:12px;line-height:20px;"><span class="c">显示输出来源：</span></div>
<div class="combo" style="left:111px;top:594px;width:121px;height:24px;"></div>
<div class="a " style="left:115px;top:596px;font-size:13px;line-height:21px;color:#000;">pvfUtility</div>
<svg class="b" style="left:219px;top:604px" width="8" height="4"><path d="M0 0H8L4.0 4z" fill="#000"/></svg>
<div class="b" style="left:236px;top:598px;width:1px;height:17px;background:#c6c6d4;"></div>
<div class="a " style="left:244px;top:596px;font-size:12px;line-height:20px;"><span class="c">全部清除</span></div>
<div class="b" style="left:7px;top:619px;width:1234px;height:95px;background:#f0f0f0;"></div>
<div class="a m" style="left:9px;top:618px;line-height:20px;font-size:12px;color:#008000;transform-origin:0 0;transform:scaleX(0.82)">[03/03/2020 10:07:56]</div>
<div class="a " style="left:134px;top:618px;font-size:12px;line-height:20px;color:#008000;"><span class="c">搜索完成，本次搜索结果总数：</span></div>
<div class="a m" style="left:302px;top:618px;line-height:20px;font-size:12px;color:#008000;transform-origin:0 0;transform:scaleX(0.82)">0</div>
<div class="a " style="left:308px;top:618px;font-size:12px;line-height:20px;color:#008000;"><span class="c">。</span></div>
<div class="a m" style="left:9px;top:634px;line-height:20px;font-size:12px;color:#008000;transform-origin:0 0;transform:scaleX(0.82)">[03/03/2020 10:08:22]</div>
<div class="a " style="left:134px;top:634px;font-size:12px;line-height:20px;color:#008000;"><span class="c">搜索完成，本次搜索结果总数：</span></div>
<div class="a m" style="left:302px;top:634px;line-height:20px;font-size:12px;color:#008000;transform-origin:0 0;transform:scaleX(0.82)">76</div>
<div class="a " style="left:314px;top:634px;font-size:12px;line-height:20px;color:#008000;"><span class="c">。</span></div>
<div class="a m" style="left:9px;top:650px;line-height:20px;font-size:12px;color:#008000;transform-origin:0 0;transform:scaleX(0.82)">[03/03/2020 10:10:54]</div>
<div class="a " style="left:134px;top:650px;font-size:12px;line-height:20px;color:#008000;"><span class="c">搜索完成，本次搜索结果总数：</span></div>
<div class="a m" style="left:302px;top:650px;line-height:20px;font-size:12px;color:#008000;transform-origin:0 0;transform:scaleX(0.82)">1</div>
<div class="a " style="left:308px;top:650px;font-size:12px;line-height:20px;color:#008000;"><span class="c">。</span></div>
<div class="a m" style="left:9px;top:666px;line-height:20px;font-size:12px;color:#008000;transform-origin:0 0;transform:scaleX(0.82)">[03/03/2020 10:23:31]</div>
<div class="a " style="left:134px;top:666px;font-size:12px;line-height:20px;color:#008000;"><span class="c">搜索完成，本次搜索结果总数：</span></div>
<div class="a m" style="left:302px;top:666px;line-height:20px;font-size:12px;color:#008000;transform-origin:0 0;transform:scaleX(0.82)">2</div>
<div class="a " style="left:308px;top:666px;font-size:12px;line-height:20px;color:#008000;"><span class="c">。</span></div>
<div class="a m" style="left:9px;top:682px;line-height:20px;font-size:12px;color:#008000;transform-origin:0 0;transform:scaleX(0.82)">[03/03/2020 11:01:58]</div>
<div class="a " style="left:134px;top:682px;font-size:12px;line-height:20px;color:#008000;"><span class="c">搜索完成，本次搜索结果总数：</span></div>
<div class="a m" style="left:302px;top:682px;line-height:20px;font-size:12px;color:#008000;transform-origin:0 0;transform:scaleX(0.82)">297</div>
<div class="a " style="left:320px;top:682px;font-size:12px;line-height:20px;color:#008000;"><span class="c">。</span></div>
<div class="b" style="left:1241px;top:619px;width:16px;height:95px;background:#f0f0f0;background:linear-gradient(90deg,#f7f7f7,#ececec 20%,#f1f1f1)"></div>
<svg class="b" style="left:1246px;top:626px;" width="7" height="4" viewBox="0 0 7 4"><path d="M0 4L3.5 0L7 4z" fill="#454545"/></svg>
<svg class="b" style="left:1246px;top:704px;" width="7" height="4" viewBox="0 0 7 4"><path d="M0 0L3.5 4L7 0z" fill="#454545"/></svg>
<div class="thumb" style="left:1241px;top:681px;width:15px;height:15px;"></div>
<div class="b" style="left:6px;top:714px;width:37px;height:20px;background:#f5f5f5;border:1px solid #cccedb;border-top:none"></div>
<div class="a " style="left:11px;top:715px;font-size:12px;line-height:20px;color:#0e70c0;"><span class="c">输出</span></div>
<div class="a " style="left:48px;top:715px;font-size:12px;line-height:20px;color:#444;"><span class="c">错误列表</span></div>
<svg class="b" style="left:263px;top:23px;" width="308" height="29" viewBox="0 0 308 29"><path fill-rule="evenodd" fill="#fb3030" d="M0 0H308V29H0zM3.2 3V26H304.8V3z"/></svg>
<svg class="b" style="left:92px;top:113px;" width="196" height="435" viewBox="0 0 196 435"><path fill-rule="evenodd" fill="#fb3030" d="M0 0H196V435H0zM3.1 3.1V431.7H192V3.1z"/></svg>
<svg class="b" style="left:3px;top:616.3px;" width="393" height="91.7" viewBox="0 0 393 91.7"><path fill-rule="evenodd" fill="#fb3030" d="M0 0H393V91.7H0zM3.2 3.3V88.6H389V3.3z"/></svg>
<svg class="b" style="left:120px;top:15px" width="50" height="75" viewBox="120 15 50 75"><path d="M136.9 21.1L149 31.6L146.5 34.4L157.2 85L139.2 37.8L134 38.4z" fill="#fb3030"/></svg>
<div class="b" style="left:1263px;top:0px;width:1px;height:740px;background:#f6f6fa;"></div>
<div class="b" style="left:1264px;top:0px;width:1px;height:740px;background:#4d5f70;"></div>
<svg class="b" role="img" aria-label="阿拉德大陆 D·N·F" style="left:1136px;top:630px" width="122" height="84" viewBox="0 0 122 84"><defs><linearGradient id="lgm" x1="0" y1="0" x2="1" y2="1"><stop offset="0" stop-color="#f0ecdc"/><stop offset="0.45" stop-color="#b8b092"/><stop offset="1" stop-color="#665c3e"/></linearGradient><linearGradient id="lgr" x1="0" y1="0" x2="1" y2="1"><stop offset="0" stop-color="#8d8975"/><stop offset="0.5" stop-color="#d9d5c3"/><stop offset="1" stop-color="#9a9683"/></linearGradient><radialGradient id="lgi" cx="0.45" cy="0.4" r="0.6"><stop offset="0" stop-color="#b9b7b2"/><stop offset="1" stop-color="#6b6862"/></radialGradient><linearGradient id="lgt" x1="0" y1="1" x2="0" y2="0"><stop offset="0" stop-color="#e04a1e"/><stop offset="0.45" stop-color="#a8200f"/><stop offset="0.8" stop-color="#3a0d07"/><stop offset="1" stop-color="#140504"/></linearGradient></defs><path d="M94.7 39.6L98.4 40.3L98.4 48.7L94.7 49.4L94.1 52.7L97.2 54.7L94.0 62.5L90.4 61.7L88.5 64.5L90.6 67.5L84.6 73.5L81.6 71.4L78.8 73.3L79.6 76.9L71.8 80.1L69.8 77.0L66.5 77.6L65.8 81.3L57.4 81.3L56.7 77.6L53.4 77.0L51.4 80.1L43.6 76.9L44.4 73.3L41.6 71.4L38.6 73.5L32.6 67.5L34.7 64.5L32.8 61.7L29.2 62.5L26.0 54.7L29.1 52.7L28.5 49.4L24.8 48.7L24.8 40.3L28.5 39.6L29.1 36.3L26.0 34.3L29.2 26.5L32.8 27.3L34.7 24.5L32.6 21.5L38.6 15.5L41.6 17.6L44.4 15.7L43.6 12.1L51.4 8.9L53.4 12.0L56.7 11.4L57.4 7.7L65.8 7.7L66.5 11.4L69.8 12.0L71.8 8.9L79.6 12.1L78.8 15.7L81.6 17.6L84.6 15.5L90.6 21.5L88.5 24.5L90.4 27.3L94.0 26.5L97.2 34.3L94.1 36.3z" fill="url(#lgm)" stroke="#77735f" stroke-width="0.6"/><circle cx="61.6" cy="44.5" r="29.5" fill="url(#lgr)" stroke="#6f6b5a" stroke-width="0.8"/><circle cx="61.6" cy="44.5" r="24.5" fill="url(#lgi)" stroke="#5d5a50" stroke-width="1"/><path d="M61.6 22.5L74.5 62.3L40.7 37.7L82.5 37.7L48.7 62.3z" fill="none" stroke="#d6d4cf" stroke-width="1.3" opacity="0.8"/><circle cx="61.6" cy="44.5" r="17" fill="none" stroke="#55524b" stroke-width="1" opacity="0.7"/><circle cx="61.6" cy="44.5" r="9" fill="none" stroke="#d0cec8" stroke-width="1" opacity="0.6"/><g font-family="'Liberation Serif','Noto Serif CJK SC',serif" font-weight="900" fill="url(#lgt)" stroke="#f4efe6" stroke-opacity="0.8" stroke-width="2.6" stroke-linejoin="round" paint-order="stroke"><text x="3.5" y="48.5" font-size="25">阿</text><text x="26.5" y="48.5" font-size="24">拉</text><text x="49" y="48.5" font-size="24">德</text><text x="72" y="48.5" font-size="26">大</text><text x="96.5" y="48.5" font-size="26">陆</text></g><path d="M32 60c6 -6 14 -7 28 -6.5c10 0.3 22 -0.5 29 2c-6 1.5 -8 3 -14 4.5c-10 2.5 -24 4.5 -36 3.5c-4 -0.3 -7 -1.5 -7 -3.5z" fill="#0d0b0a"/><text x="62.5" y="63.60000000000002" font-family="Liberation Sans,sans-serif" font-weight="bold" font-size="11" fill="#f1f1ee" text-anchor="middle" letter-spacing="1.3" transform="skewX(-8)" style="transform-origin:62.5px 60px">D·N·F</text></svg>
<div class="thumb" style="left:1241px;top:681px;width:15px;height:15px;"></div></body></html>
